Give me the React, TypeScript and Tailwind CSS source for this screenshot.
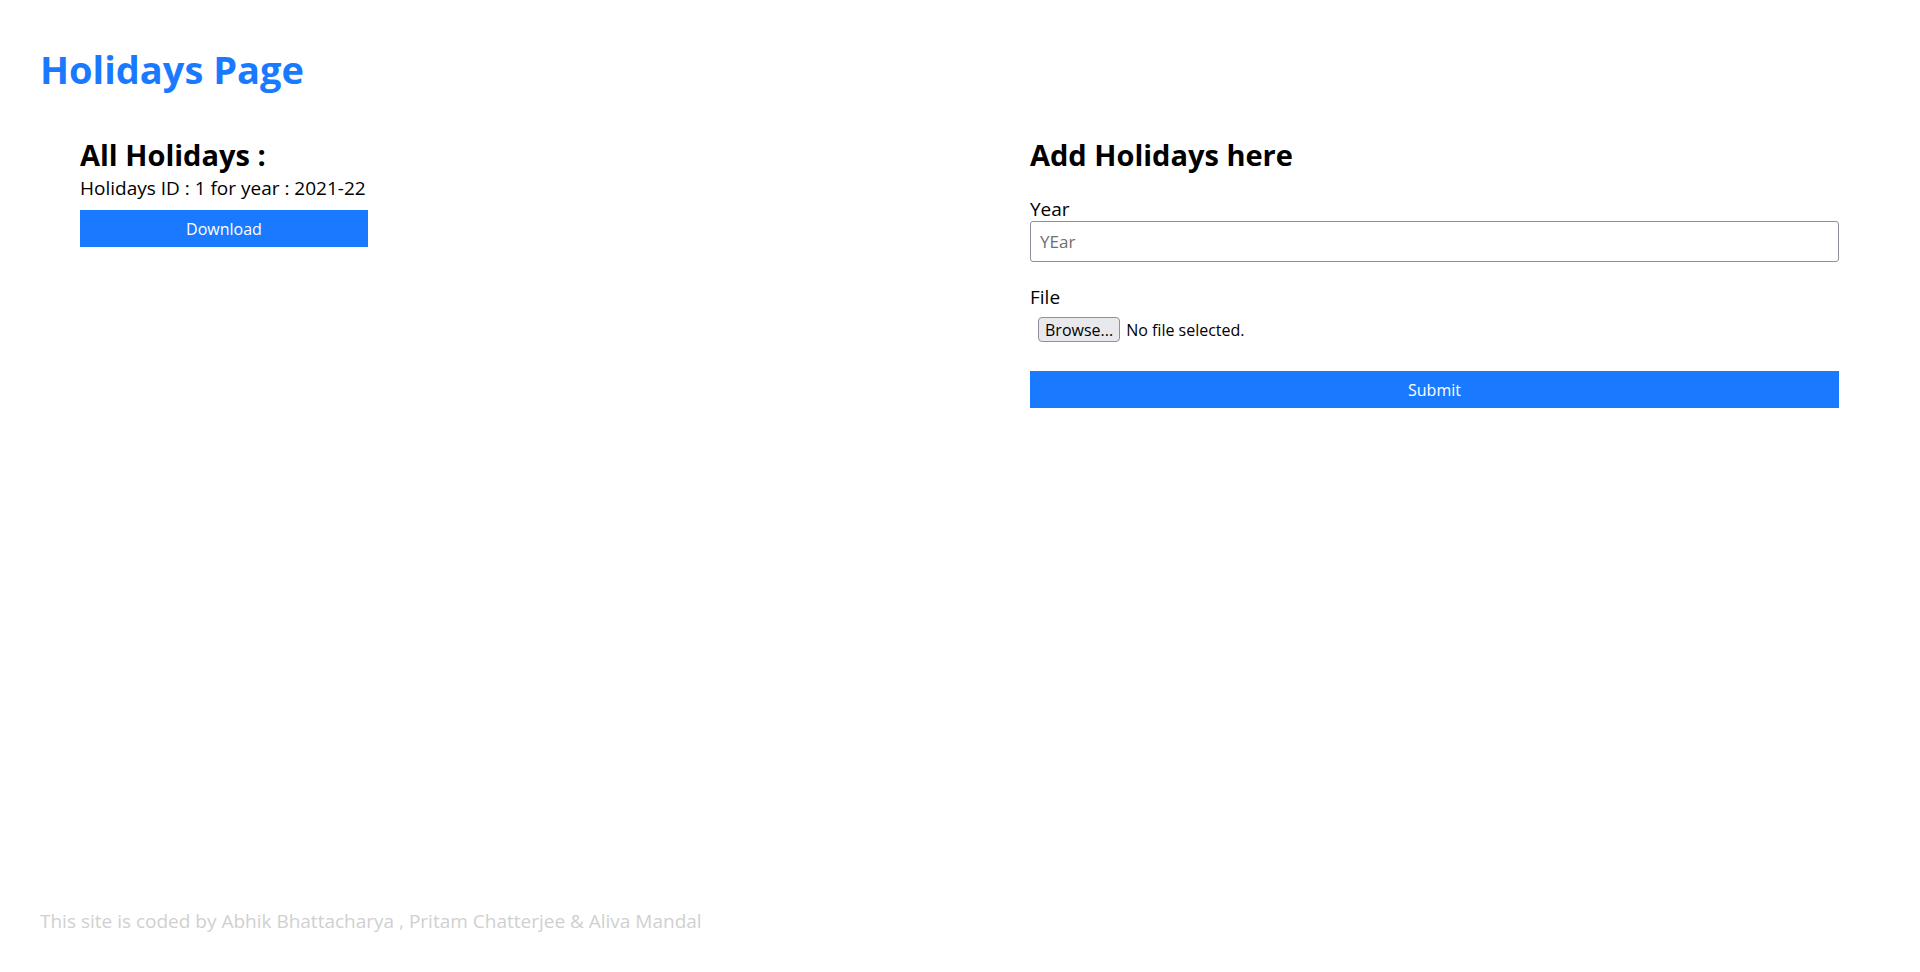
export default function App() {
  return (
    <div className="flex min-h-screen flex-col bg-white font-['Open_Sans',sans-serif] text-black">
      <h1 className="pl-[40px] pt-[46px] text-[38px] leading-[46px] font-bold text-[#1a7aff]">Holidays Page</h1>

      <div className="mt-[46px] grid grid-cols-[950px_1fr] pl-[80px] pr-[81px]">
        <section className="flex flex-col">
          <h3 className="text-[29px] leading-[34px] font-bold">All Holidays :</h3>
          <p className="mt-[1px] text-[19px] leading-[30px]">Holidays ID : 1 for year : 2021-22</p>
          <button className="mt-[7px] h-[37px] w-[288px] bg-[#1a7aff] text-[16px] text-white">Download</button>
        </section>

        <section className="flex flex-col">
          <h3 className="text-[29px] leading-[34px] font-bold">Add Holidays here</h3>
          <label htmlFor="year" className="mt-[25px] text-[19px] leading-[24px]">
            Year
          </label>
          <input
            id="year"
            type="text"
            placeholder="YEar"
            className="h-[41px] w-full rounded-[3px] border border-[#8f8f9d] px-[9px] text-[17px] placeholder:text-[#707070]"
          />
          <label className="mt-[23px] text-[19px] leading-[24px]">File</label>
          <div className="mt-[8px] flex items-center gap-[6px] pl-[8px] text-[16px]">
            <span className="flex h-[25px] items-center rounded-[4px] border border-[#8f8f9d] bg-[#e9e9ed] px-[6px]">
              Browse...
            </span>
            <span>No file selected.</span>
          </div>
          <button className="mt-[29px] h-[37px] w-full bg-[#1a7aff] text-[16px] text-white">Submit</button>
        </section>
      </div>

      <footer className="mt-auto pb-[37px] pl-[40px] text-[19px] text-[#d0d0d0]">
        This site is coded by Abhik Bhattacharya , Pritam Chatterjee &amp; Aliva Mandal
      </footer>
    </div>
  )
}
